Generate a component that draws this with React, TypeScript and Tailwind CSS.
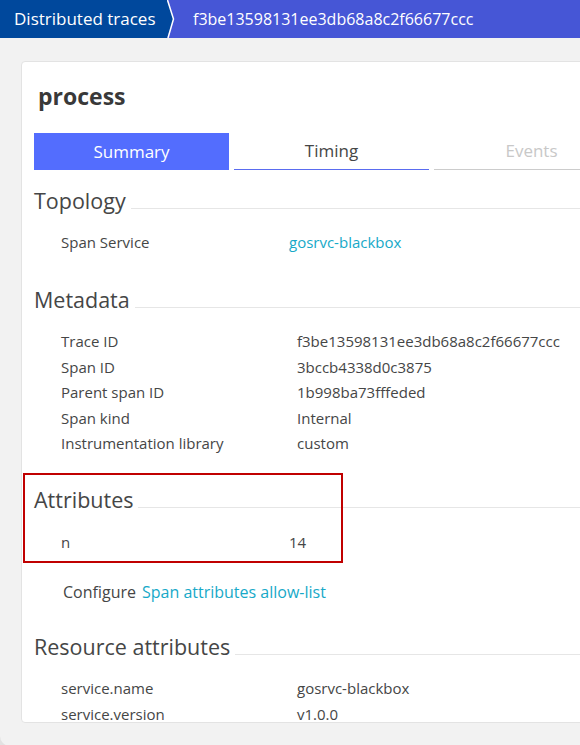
import React from "react";

const font = { fontFamily: '"Open Sans", "Noto Sans", sans-serif' };

function Heading({ children }: { children: React.ReactNode }) {
  return (
    <div className="flex items-baseline gap-[5px]">
      <h2 className="text-[21.5px] leading-[27px] text-[#454646] whitespace-nowrap">{children}</h2>
      <div className="h-px flex-1 bg-[#e6e6e6]" />
    </div>
  );
}

function Rows({ rows, labelW }: { rows: [string, string, boolean?][]; labelW: string }) {
  return (
    <div className="pl-[27px] text-[15px] text-[#454646]">
      {rows.map(([k, v, link]) => (
        <div key={k} className="flex h-[25.5px] items-center">
          <div className={labelW + " shrink-0"}>{k}</div>
          <div className={link ? "text-[#17a9c8]" : ""}>{v}</div>
        </div>
      ))}
    </div>
  );
}

export default function App() {
  return (
    <div className="h-[745px] overflow-hidden bg-[#e2e2e2]" style={font}>
      <div className="h-[746px] overflow-hidden rounded-bl-[10px] bg-[#f2f2f2]">
        <div className="flex h-[38px] text-white">
          <div className="flex w-[167px] shrink-0 items-center bg-[#00489c] pl-[14px] text-[17px]">Distributed traces</div>
          <svg width="8" height="38" viewBox="0 0 8 38" className="block shrink-0">
            <rect x="0" y="0" width="8" height="38" fill="#4656d6" />
            <polygon points="0,0 6.5,19 0,38" fill="#00489c" />
            <polyline points="0.5,0 6.5,19 1,38" fill="none" stroke="#ffffff" strokeWidth="1.5" />
          </svg>
          <div className="flex flex-1 items-center bg-[#4656d6] pl-[18px] text-[16px]">f3be13598131ee3db68a8c2f66677ccc</div>
        </div>

        <div className="ml-[21px] mt-[23px] h-[662px] w-[600px] overflow-hidden rounded-[4px] border border-[#e3e3e3] bg-white pl-[12px] pt-[18px]">
          <h1 className="ml-[4px] text-[23px] font-bold leading-[32px] text-[#393939]">process</h1>

          <div className="mt-[21px] flex gap-[5px] text-[17px]">
            <div className="flex h-[37px] w-[195px] shrink-0 items-center justify-center bg-[#536dfe] text-white">Summary</div>
            <div className="flex h-[37px] w-[195px] shrink-0 items-center justify-center border-b border-[#5a6cf0] text-[#454646]">Timing</div>
            <div className="flex h-[37px] w-[195px] shrink-0 items-center justify-center border-b border-[#cccccc] text-[#c8c8c8]">Events</div>
          </div>

          <div className="mt-[17px]">
            <Heading>Topology</Heading>
          </div>
          <div className="mt-[15px]">
            <Rows labelW="w-[228px]" rows={[["Span Service", "gosrvc-blackbox", true]]} />
          </div>

          <div className="mt-[31px]">
            <Heading>Metadata</Heading>
          </div>
          <div className="mt-[16px]">
            <Rows
              labelW="w-[236px]"
              rows={[
                ["Trace ID", "f3be13598131ee3db68a8c2f66677ccc"],
                ["Span ID", "3bccb4338d0c3875"],
                ["Parent span ID", "1b998ba73fffeded"],
                ["Span kind", "Internal"],
                ["Instrumentation library", "custom"],
              ]}
            />
          </div>

          <div className="relative mt-[30px]">
            <Heading>Attributes</Heading>
            <div className="mt-[16px]">
              <Rows labelW="w-[228px]" rows={[["n", "14"]]} />
            </div>
            <div className="pointer-events-none absolute left-[-11px] top-[-13px] h-[90px] w-[320px] border-[2.5px] border-[#c00000]" />
          </div>

          <div className="mt-[25px] flex h-[25px] items-center pl-[29px] text-[16px] text-[#454646]">
            Configure <span className="ml-[6px] text-[#17a9c8]">Span attributes allow-list</span>
          </div>

          <div className="mt-[28px]">
            <Heading>Resource attributes</Heading>
          </div>
          <div className="mt-[16px]">
            <Rows
              labelW="w-[236px]"
              rows={[
                ["service.name", "gosrvc-blackbox"],
                ["service.version", "v1.0.0"],
              ]}
            />
          </div>
        </div>
      </div>
    </div>
  );
}
